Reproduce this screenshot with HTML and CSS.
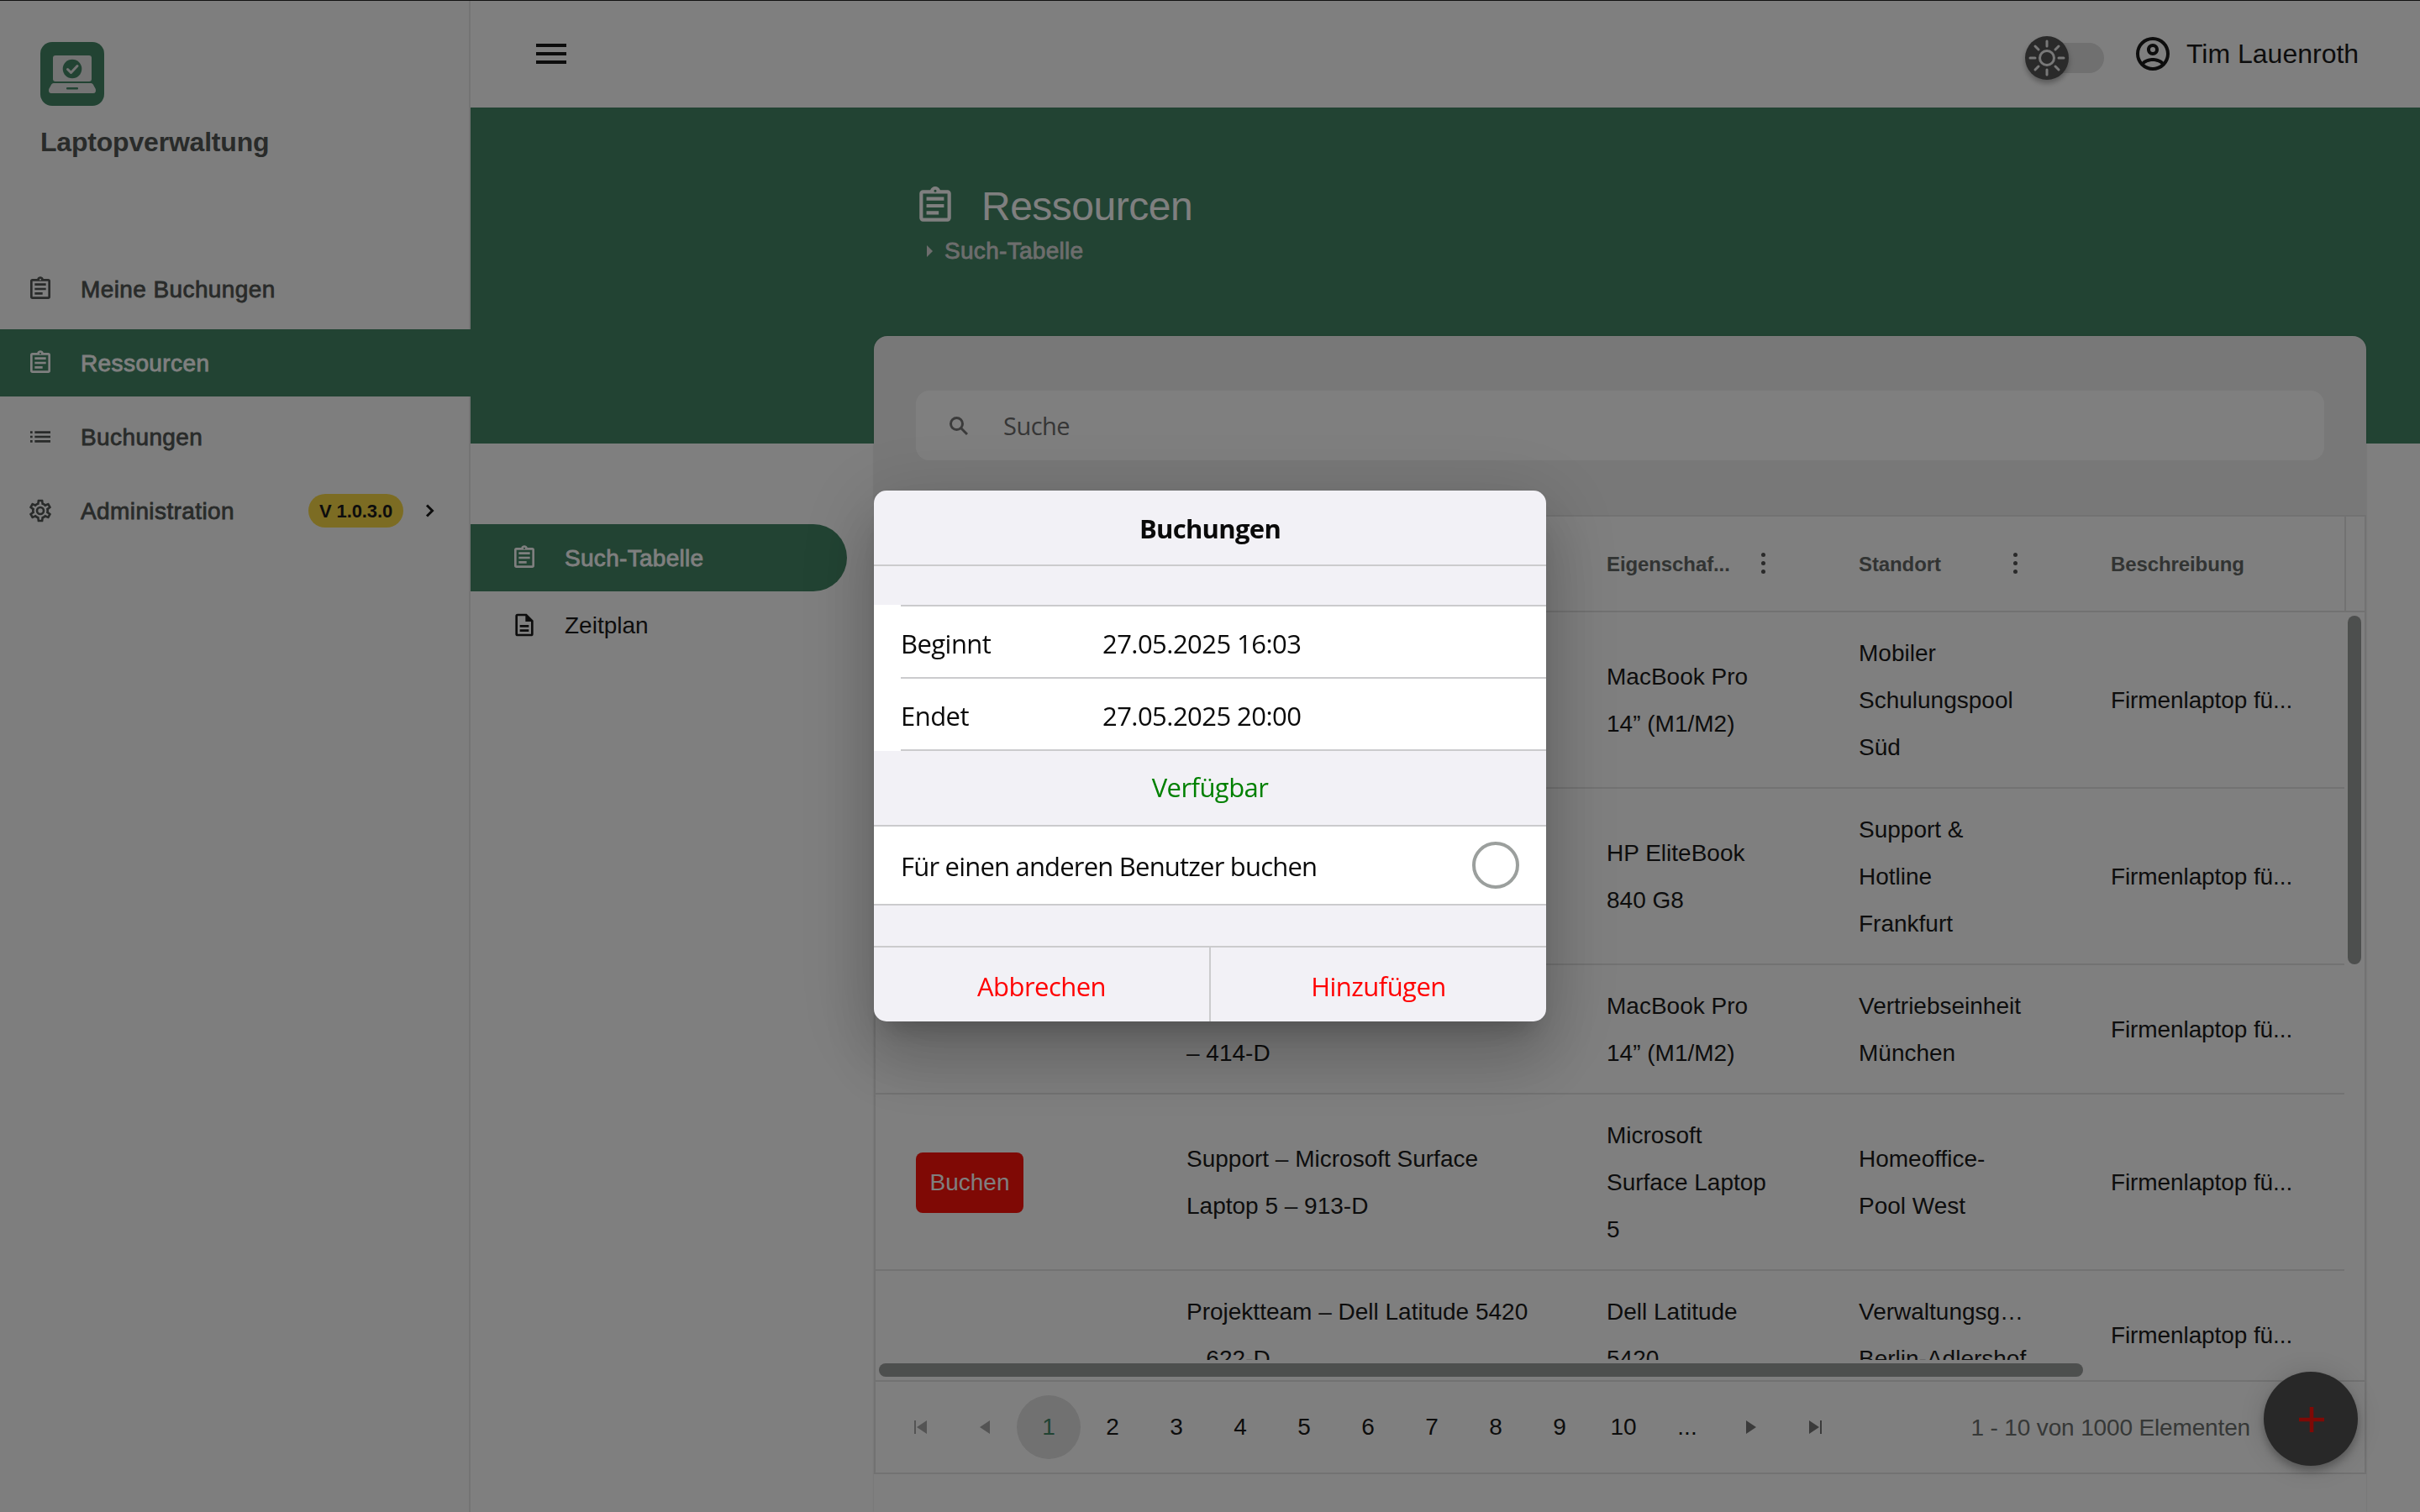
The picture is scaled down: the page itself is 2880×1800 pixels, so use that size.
FILE: index.html
```html
<!DOCTYPE html>
<html lang="de">
<head>
    <meta charset="UTF-8">
    <meta name="viewport" content="width=device-width, initial-scale=1.0">
    <title>Laptopverwaltung</title>
    <link rel="stylesheet" href="styles.css">
</head>
<body>
    <svg class="sprite">
        <symbol id="i-clipboard" viewBox="0 0 24 24"><path d="M19 3h-4.18C14.4 1.84 13.3 1 12 1s-2.4.84-2.82 2H5a2 2 0 0 0-2 2v14a2 2 0 0 0 2 2h14a2 2 0 0 0 2-2V5a2 2 0 0 0-2-2zm-7-.25a.75.75 0 1 1 0 1.5.75.75 0 0 1 0-1.5zM19 19H5V5h14v14zM7 7h10v2H7zm0 4h10v2H7zm0 4h7v2H7z"/></symbol>
        <symbol id="i-list" viewBox="0 0 24 24"><path d="M3 7h2v2H3zm0 4h2v2H3zm0 4h2v2H3zM7 7h14v2H7zm0 4h14v2H7zm0 4h14v2H7z"/></symbol>
        <symbol id="i-cog" viewBox="0 0 24 24"><path d="M12 8a4 4 0 1 1 0 8 4 4 0 0 1 0-8m0 2a2 2 0 1 0 0 4 2 2 0 0 0 0-4m-2 12c-.25 0-.46-.18-.5-.42l-.37-2.65c-.63-.25-1.17-.59-1.69-.99l-2.49 1.01c-.22.08-.49 0-.61-.22l-2-3.46a.493.493 0 0 1 .12-.64l2.11-1.66L4.5 12l.07-1-2.11-1.63a.493.493 0 0 1-.12-.64l2-3.46c.12-.22.39-.31.61-.22l2.49 1c.52-.39 1.06-.73 1.69-.98l.37-2.65c.04-.24.25-.42.5-.42h4c.25 0 .46.18.5.42l.37 2.65c.63.25 1.17.59 1.69.98l2.49-1c.22-.09.49 0 .61.22l2 3.46c.13.22.07.49-.12.64L19.43 11l.07 1-.07 1 2.11 1.63c.19.15.25.42.12.64l-2 3.46c-.12.22-.39.31-.61.22l-2.49-1c-.52.39-1.06.73-1.69.98l-.37 2.65c-.04.24-.25.42-.5.42h-4m1.25-18-.37 2.61c-1.2.25-2.26.89-3.03 1.78L5.44 7.35l-.75 1.3L6.8 10.2a5.55 5.55 0 0 0 0 3.6l-2.12 1.56.75 1.3 2.43-1.04c.77.88 1.82 1.52 3.01 1.76l.37 2.62h1.52l.37-2.61c1.19-.25 2.24-.89 3.01-1.77l2.43 1.04.75-1.3-2.12-1.55c.4-1.17.4-2.44 0-3.61l2.11-1.55-.75-1.3-2.41 1.04a5.42 5.42 0 0 0-3.03-1.77L12.75 4h-1.5z"/></symbol>
        <symbol id="i-document" viewBox="0 0 24 24"><path d="M6 2a2 2 0 0 0-2 2v16a2 2 0 0 0 2 2h12a2 2 0 0 0 2-2V8l-6-6H6zm0 2h7v5h5v11H6V4zm2 8v2h8v-2H8zm0 4v2h8v-2H8z"/></symbol>
        <symbol id="i-account" viewBox="0 0 24 24"><path d="M12 2a10 10 0 1 0 0 20 10 10 0 0 0 0-20zM7.07 18.28c.43-.9 3.05-1.78 4.93-1.78s4.51.88 4.93 1.78A7.893 7.893 0 0 1 12 20c-1.86 0-3.57-.64-4.93-1.72zm11.29-1.45c-1.43-1.74-4.9-2.33-6.36-2.33s-4.93.59-6.36 2.33A7.928 7.928 0 0 1 4 12c0-4.41 3.59-8 8-8s8 3.59 8 8c0 1.82-.62 3.49-1.64 4.83zM12 6c-1.94 0-3.5 1.56-3.5 3.5S10.06 13 12 13s3.5-1.56 3.5-3.5S13.94 6 12 6zm0 5a1.5 1.5 0 1 1 0-3 1.5 1.5 0 0 1 0 3z"/></symbol>
        <symbol id="i-menu" viewBox="0 0 24 24"><path d="M3 6h18v2H3zm0 5h18v2H3zm0 5h18v2H3z"/></symbol>
    </svg>

    <div class="app">
        <aside class="sidebar">
            <div class="brand">
                <svg class="logo" viewBox="0 0 76 76">
                    <rect width="76" height="76" rx="14" fill="#448766"/>
                    <rect x="15" y="16" width="46" height="31" rx="3" fill="#e9e9e9"/>
                    <path d="M15.500 49h45q1.500 0 2.300 1.600l3 5.400q1 5-3 5h-49.600q-4 0-3-5l3-5.400q.8-1.600 2.300-1.600z" fill="#e9e9e9"/>
                    <rect x="31" y="54" width="14" height="2.500" rx="1" fill="#448766"/>
                    <circle cx="38" cy="32" r="11.300" fill="#448766"/>
                    <path d="M32.500 32.500l4 4 7.500-8" fill="none" stroke="#e9e9e9" stroke-width="3" stroke-linecap="round" stroke-linejoin="round"/>
                </svg>
                <div class="brand-name">Laptopverwaltung</div>
            </div>
            <nav class="nav">
                <a class="nav-item"><svg class="icon"><use href="#i-clipboard"/></svg><span>Meine Buchungen</span></a>
                <a class="nav-item active"><svg class="icon"><use href="#i-clipboard"/></svg><span>Ressourcen</span></a>
                <a class="nav-item"><svg class="icon"><use href="#i-list"/></svg><span>Buchungen</span></a>
                <a class="nav-item"><svg class="icon"><use href="#i-cog"/></svg><span>Administration</span>
                    <b class="badge">V 1.0.3.0</b>
                    <svg class="chevron" viewBox="0 0 12 16"><path d="M2 1.500L8.500 8 2 14.500"/></svg>
                </a>
            </nav>
        </aside>

        <main class="main">
            <header class="header">
                <svg class="icon-lg"><use href="#i-menu"/></svg>
                <div class="header-right">
                    <div class="toggle">
                        <div class="thumb">
                            <svg viewBox="0 0 52 52">
                                <circle cx="26" cy="26" r="8.500"/>
                                <path d="M26 6v6M26 40v6M6 26h6M40 26h6M12 12l4 4M36 36l4 4M12 40l4-4M36 16l4-4"/>
                            </svg>
                        </div>
                    </div>
                    <svg class="icon-lg"><use href="#i-account"/></svg>
                    <span class="user">Tim Lauenroth</span>
                </div>
            </header>

            <div class="banner">
                <div class="banner-title">
                    <svg><use href="#i-clipboard"/></svg>
                    <h1>Ressourcen</h1>
                </div>
                <div class="breadcrumb"><i></i>Such-Tabelle</div>
            </div>

            <div class="content">
                <nav class="subnav">
                    <a class="subnav-item active"><svg class="icon"><use href="#i-clipboard"/></svg><span>Such-Tabelle</span></a>
                    <a class="subnav-item"><svg class="icon"><use href="#i-document"/></svg><span>Zeitplan</span></a>
                </nav>

                <section class="card">
                    <div class="search">
                        <svg viewBox="0 0 22 22"><circle cx="8.500" cy="8.500" r="7"/><path d="M13.500 13.500l7.500 7.500"/></svg>
                        <span>Suche</span>
                    </div>

                    <div class="grid">
                        <div class="grid-head">
                            <div></div>
                            <div></div>
                            <div>Eigenschaf...<i class="dots"></i></div>
                            <div>Standort<i class="dots"></i></div>
                            <div class="last">Beschreibung</div>
                        </div>
                        <div class="grid-body">
                            <div class="rows">
                                <div class="row">
                                    <div></div>
                                    <div></div>
                                    <div>MacBook Pro<br>14” (M1/M2)</div>
                                    <div>Mobiler<br>Schulungspool<br>Süd</div>
                                    <div>Firmenlaptop fü...</div>
                                </div>
                                <div class="row">
                                    <div></div>
                                    <div></div>
                                    <div>HP EliteBook<br>840 G8</div>
                                    <div>Support &amp;<br>Hotline<br>Frankfurt</div>
                                    <div>Firmenlaptop fü...</div>
                                </div>
                                <div class="row">
                                    <div></div>
                                    <div>&nbsp;<br>– 414-D</div>
                                    <div>MacBook Pro<br>14” (M1/M2)</div>
                                    <div>Vertriebseinheit<br>München</div>
                                    <div>Firmenlaptop fü...</div>
                                </div>
                                <div class="row">
                                    <div><button class="book">Buchen</button></div>
                                    <div>Support – Microsoft Surface<br>Laptop 5 – 913-D</div>
                                    <div>Microsoft<br>Surface Laptop<br>5</div>
                                    <div>Homeoffice-<br>Pool West</div>
                                    <div>Firmenlaptop fü...</div>
                                </div>
                                <div class="row">
                                    <div></div>
                                    <div>Projektteam – Dell Latitude 5420<br>– 622-D</div>
                                    <div>Dell Latitude<br>5420</div>
                                    <div>Verwaltungsg…<br>Berlin-Adlershof</div>
                                    <div>Firmenlaptop fü...</div>
                                </div>
                            </div>
                            <div class="scroll-y"></div>
                            <div class="scroll-x"></div>
                        </div>
                        <div class="pager">
                            <span class="disabled"><svg viewBox="0 0 16 16"><path d="M0 0h2v16H0zM15 0v16L3 8z"/></svg></span>
                            <span class="disabled"><svg viewBox="0 0 16 16"><path d="M14 0v16L2 8z"/></svg></span>
                            <span class="current">1</span>
                            <span>2</span>
                            <span>3</span>
                            <span>4</span>
                            <span>5</span>
                            <span>6</span>
                            <span>7</span>
                            <span>8</span>
                            <span>9</span>
                            <span>10</span>
                            <span>...</span>
                            <span class="arrow"><svg viewBox="0 0 16 16"><path d="M2 0v16l12-8z"/></svg></span>
                            <span class="arrow"><svg viewBox="0 0 16 16"><path d="M14 0h2v16h-2zM1 0v16l12-8z"/></svg></span>
                            <div class="pager-info">1 - 10 von 1000 Elementen</div>
                        </div>
                    </div>
                </section>
            </div>
        </main>

        <button class="fab"><svg viewBox="0 0 30 30"><path d="M15 0v30M0 15h30"/></svg></button>
    </div>

    <div class="overlay">
        <div class="modal">
            <div class="modal-title">Buchungen</div>
            <div class="fields">
                <div class="field"><span class="label">Beginnt</span><span>27.05.2025 16:03</span></div>
                <div class="field"><span class="label">Endet</span><span>27.05.2025 20:00</span></div>
            </div>
            <div class="status">Verfügbar</div>
            <div class="option"><span>Für einen anderen Benutzer buchen</span><i class="radio"></i></div>
            <div class="actions">
                <button class="cancel">Abbrechen</button>
                <button class="add">Hinzufügen</button>
            </div>
        </div>
    </div>
</body>
</html>
```
FILE: styles.css
```css
* {
    box-sizing: border-box;
}
body {
    margin: 0;
    font-family: "Liberation Sans", Arial, sans-serif;
    font-size: 28px;
    color: #1a1a1a;
    background: #fff;
    overflow: hidden;
}
button {
    font: inherit;
    border: none;
    padding: 0;
}
svg {
    display: block;
    fill: currentColor;
    flex: none;
}
.sprite {
    display: none;
}
.icon {
    width: 32px;
    height: 32px;
}
.icon-lg {
    width: 48px;
    height: 48px;
}
.app {
    display: flex;
    height: 1800px;
    position: relative;
}

/* Sidebar */
.sidebar {
    width: 560px;
    background: #fdfdfd;
    box-shadow: inset -2px 0 #e8e8e8;
    color: #525654;
}
.brand {
    height: 304px;
    padding: 50px 48px 0;
}
.logo {
    width: 76px;
    height: 76px;
}
.brand-name {
    margin-top: 24px;
    font-size: 32px;
    line-height: 38px;
    font-weight: bold;
    letter-spacing: -0.2px;
}
.nav {
    display: flex;
    flex-direction: column;
    gap: 8px;
}
.nav-item {
    height: 80px;
    padding: 0 42px 0 32px;
    display: flex;
    align-items: center;
    letter-spacing: 0.4px;
    -webkit-text-stroke: 0.8px;
}
.nav-item span {
    margin-left: 32px;
    padding-top: 2px;
}
.nav-item .icon, .subnav-item .icon {
    -webkit-text-stroke: 0;
}
.nav-item.active, .subnav-item.active {
    background: #448766;
    color: #fff;
}
.badge {
    margin-left: auto;
    width: 113px;
    height: 40px;
    line-height: 41px;
    border-radius: 20px;
    background: #f9d946;
    color: #1a1a1a;
    font-size: 22px;
    text-align: center;
    letter-spacing: -0.1px;
    -webkit-text-stroke: 0;
}
.chevron {
    width: 12px;
    height: 16px;
    margin-left: 26px;
    fill: none;
    stroke: #1a1a1a;
    stroke-width: 3;
}

/* Header */
.main {
    flex: 1;
    display: flex;
    flex-direction: column;
}
.header {
    height: 128px;
    padding: 0 72px;
    display: flex;
    align-items: center;
    justify-content: space-between;
}
.header-right {
    display: flex;
    align-items: center;
    font-size: 32px;
}
.user {
    width: 206px;
    margin-left: 16px;
    white-space: nowrap;
}
.toggle {
    width: 87px;
    height: 36px;
    margin: 9px 34px 0 0;
    border-radius: 18px;
    background: #e0e0e0;
    display: flex;
    align-items: center;
}
.thumb {
    width: 52px;
    height: 52px;
    margin-left: -7px;
    border-radius: 50%;
    background: #555;
    box-shadow: 0 4px 6px rgba(0, 0, 0, 0.3);
    flex: none;
}
.thumb svg {
    fill: none;
    stroke: #f0f0f0;
    stroke-width: 3;
    stroke-linecap: round;
}
.banner {
    height: 400px;
    padding: 92px 0 0 528px;
    background: #448766;
    color: #fff;
}
.banner-title {
    display: flex;
    align-items: center;
    height: 50px;
}
.banner-title svg {
    width: 50px;
    height: 50px;
}
.banner-title h1 {
    margin: 2px 0 0 30px;
    font-size: 48px;
    font-weight: normal;
    line-height: 50px;
    letter-spacing: -0.5px;
}
.breadcrumb {
    margin-top: 13px;
    padding-left: 15px;
    display: flex;
    align-items: center;
    line-height: 32px;
    letter-spacing: 0.3px;
    color: #dbdbdb;
    -webkit-text-stroke: 0.8px;
}
.breadcrumb i {
    border: 7px solid transparent;
    border-left-color: #dbdbdb;
    border-right-width: 0;
    margin-right: 14px;
}

/* Content */
.content {
    flex: 1;
    display: flex;
    margin-top: -128px;
    min-height: 0;
}
.subnav {
    width: 480px;
    padding-top: 224px;
}
.subnav-item {
    width: 448px;
    height: 80px;
    padding-left: 48px;
    display: flex;
    align-items: center;
    border-radius: 0 40px 40px 0;
}
.subnav-item span {
    margin-left: 32px;
    padding-top: 1px;
}
.subnav-item.active {
    letter-spacing: 0.3px;
    -webkit-text-stroke: 0.8px;
}
.card {
    width: 1776px;
    border-radius: 16px 16px 0 0;
    background: linear-gradient(#f0f0f0 214px, #fff 214px);
    box-shadow: 0 0 2px rgba(0, 0, 0, 0.2);
    overflow: hidden;
}
.search {
    height: 83px;
    margin: 65px 50px;
    padding-left: 40px;
    border-radius: 16px;
    background: #fff;
    display: flex;
    align-items: center;
    font-family: "Open Sans", sans-serif;
    font-size: 29px;
    color: #6c6c6c;
}
.search svg {
    width: 22px;
    height: 22px;
    fill: none;
    stroke: #777;
    stroke-width: 3;
}
.search span {
    margin-left: 42px;
    letter-spacing: -0.5px;
}

/* Grid */
.grid {
    border: 2px solid #e4e4e4;
    background: #fff;
}
.grid-head, .row {
    display: grid;
    grid-template-columns: 320px 500px 300px 300px 330px;
}
.grid-head {
    height: 114px;
    border-bottom: 2px solid #e4e4e4;
    font-size: 24px;
    font-weight: bold;
    letter-spacing: -0.1px;
    color: #646967;
}
.grid-head > div {
    padding: 2px 59px 0 50px;
    display: flex;
    align-items: center;
    justify-content: space-between;
}
.grid-head .last {
    border-right: 2px solid #e4e4e4;
}
.dots {
    width: 5px;
    height: 5px;
    margin: -4px 2px 0 0;
    border-radius: 50%;
    background: #555;
    box-shadow: 0 -10px #555, 0 10px #555;
}
.grid-body {
    display: grid;
    grid-template: 890px 24px / 1748px 24px;
    border-bottom: 2px solid #e4e4e4;
    box-sizing: content-box;
}
.rows {
    overflow: hidden;
}
.row {
    grid-template-columns: 320px 500px 300px 300px 328px;
    align-items: center;
    padding: 21px 0 19px;
    border-bottom: 2px solid #e4e4e4;
    line-height: 56px;
}
.row > div {
    padding-left: 50px;
    white-space: nowrap;
}
.row > div:first-child {
    padding-left: 48px;
}
.row > div:last-child {
    letter-spacing: -0.1px;
}
.book {
    display: block;
    width: 128px;
    height: 72px;
    border-radius: 8px;
    background: #ff120a;
    color: #fff;
}
.scroll-y {
    width: 16px;
    height: 415px;
    margin: 4px 4px 0;
    border-radius: 8px;
    background: #9b9e9d;
}
.scroll-x {
    width: 1433px;
    height: 16px;
    margin: 4px;
    border-radius: 8px;
    background: #9b9e9d;
}
.pager {
    height: 108px;
    padding-left: 16px;
    display: flex;
    align-items: center;
}
.pager span {
    width: 76px;
    height: 76px;
    display: flex;
    align-items: center;
    justify-content: center;
}
.pager svg {
    width: 16px;
    height: 16px;
}
.pager .current {
    border-radius: 50%;
    background: #e2e2e2;
    color: #448766;
}
.pager .disabled {
    color: #a8a8a8;
}
.pager .arrow {
    color: #777;
}
.pager-info {
    margin: 1px 136px 0 auto;
    color: #6c706e;
    letter-spacing: -0.15px;
}
.fab {
    position: absolute;
    left: 2694px;
    top: 1633px;
    width: 112px;
    height: 112px;
    border-radius: 50%;
    background: #505050;
    box-shadow: 0 6px 10px rgba(0, 0, 0, 0.25), 0 2px 36px rgba(0, 0, 0, 0.15);
    display: flex;
    align-items: center;
    justify-content: center;
}
.fab svg {
    width: 30px;
    height: 30px;
    margin: 2px 0 0 2px;
    stroke: #ff120a;
    stroke-width: 4.6;
}

/* Booking dialog */
.overlay {
    position: fixed;
    inset: 0;
    background: rgba(0, 0, 0, 0.5);
    box-shadow: inset 0 1px #111;
    display: flex;
    align-items: center;
    justify-content: center;
}
.modal {
    width: 800px;
    height: 632px;
    border-radius: 15px;
    background: #f2f1f6;
    color: #0a0a0a;
    overflow: hidden;
    font-family: "Open Sans", sans-serif;
    font-size: 31px;
    letter-spacing: -0.55px;
    box-shadow: 0 22px 30px -14px rgba(0, 0, 0, 0.2), 0 48px 76px 6px rgba(0, 0, 0, 0.14), 0 18px 92px 16px rgba(0, 0, 0, 0.12);
}
.modal-title {
    height: 90px;
    line-height: 91px;
    border-bottom: 2px solid #cbcbcd;
    font-weight: bold;
    letter-spacing: -0.7px;
    text-align: center;
}
.fields {
    margin-top: 46px;
    padding-left: 32px;
    background: #fff;
}
.field {
    height: 86px;
    border-top: 2px solid #cbcbcd;
    display: flex;
    align-items: center;
    padding-top: 4px;
}
.field:last-child {
    height: 88px;
    border-bottom: 2px solid #cbcbcd;
}
.label {
    width: 240px;
}
.status {
    height: 88px;
    line-height: 87px;
    text-align: center;
    color: #008000;
}
.option {
    height: 96px;
    padding: 0 32px;
    display: flex;
    align-items: center;
    justify-content: space-between;
    background: #fff;
    border: solid #cbcbcd;
    border-width: 2px 0;
}
.option span {
    padding-top: 2px;
    letter-spacing: -0.8px;
}
.radio {
    width: 56px;
    height: 56px;
    border: 4px solid #9b9f9d;
    border-radius: 50%;
}
.actions {
    margin-top: 48px;
    height: 90px;
    display: flex;
    border-top: 2px solid #cbcbcd;
}
.actions button {
    flex: 1;
    background: none;
    color: #f00;
    letter-spacing: inherit;
    padding-top: 3px;
}
.cancel {
    border-right: 2px solid #cbcbcd;
}
```
